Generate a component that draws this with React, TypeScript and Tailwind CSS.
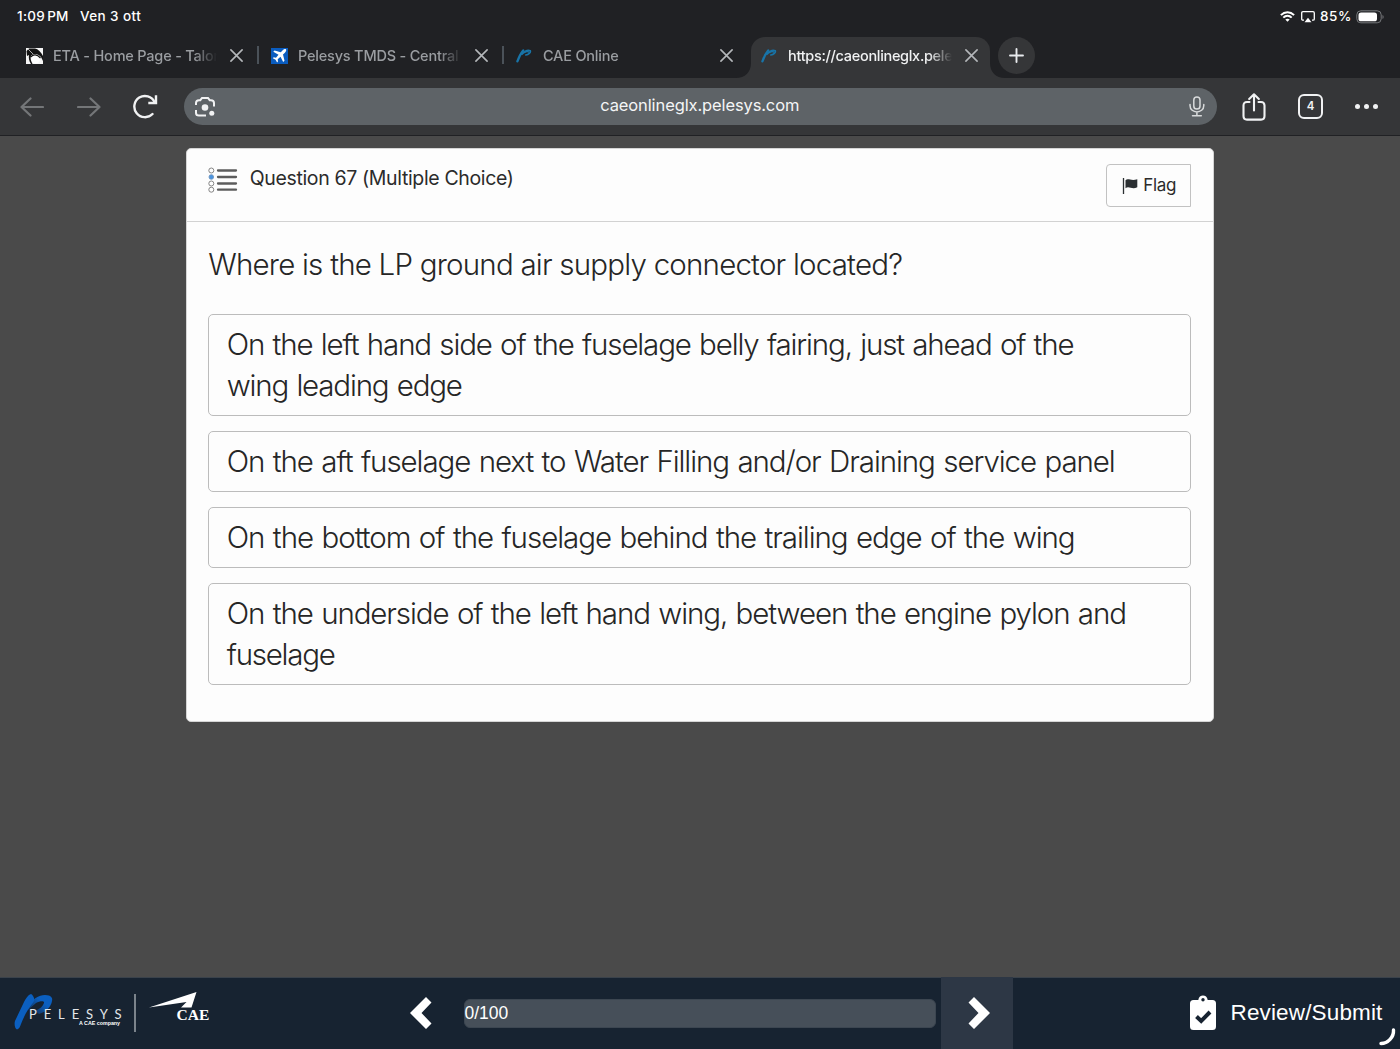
import type { ReactNode } from 'react';

const PelesysLogo = ({ className }: { className: string }) => (
  <svg className={className} viewBox="0 0 39 36" fill="none">
    <defs>
      <linearGradient id="loop" x1="36" y1="3" x2="22" y2="19" gradientUnits="userSpaceOnUse">
        <stop offset="0.4" stopColor="#0b5fc0" />
        <stop offset="1" stopColor="#123a6b" />
      </linearGradient>
    </defs>
    <path d="M13 13 C18 5 25 1 31 1 C37 1 39 4 38 7 C37 13 32 18 25 20 L21 17 C26 15 29 12 30 9 C31 6.500 26 6.500 22 9 L14 16 Z" fill="url(#loop)" />
    <path d="M17 0 C14 1 12 4 10 8 L1 27 C0 30 1 35 3 35.500 C5 35 6 33 7 30 C10 22 14 15 19.500 8 C21.500 5 19 1 17 0 Z" fill="#0b5fc0" />
  </svg>
);

const PelesysFavicon = () => (
  <svg className="ml-[1px] h-[14px] w-[16px]" viewBox="0 0 16 14" fill="none" stroke="#1874a8" strokeLinecap="round">
    <path d="M7.200 1.400 C5 4 2.800 8.500 1.400 12.400" strokeWidth="2.300" />
    <path d="M6 5.200 C9 1.800 12.500 0.900 14.200 1.700 C15 3.500 12.500 5.600 9.800 6" strokeWidth="1.700" />
    <path d="M8 3.800 C10 2.500 12 2.500 12.500 3" strokeWidth="1.300" />
  </svg>
);

const TalonIcon = () => (
  <svg className="ml-[1px] h-4 w-[17px]" viewBox="0 0 17 16">
    <rect width="17" height="16" fill="#f5f5f5" />
    <path d="M0.500 3 L3 0.500 H9 C12 1 15 4 17 8 V13 L15 9 C12 5.500 7 5 5 8 C4 10.500 5 13 6.500 16 H5 C3 13 2.500 10 3 7 L1 8 Z" fill="#131313" />
    <path d="M2 1 L7 6" stroke="#e8e8e8" strokeWidth="0.700" />
    <circle cx="9.800" cy="11.200" r="4.300" fill="#fff" />
    <path d="M5 9 C7 6 11 6 14.500 10" stroke="#131313" strokeWidth="1.200" fill="none" />
  </svg>
);

const PlaneIcon = () => (
  <svg className="ml-[1px] h-4 w-[17px]" viewBox="0 0 17 16">
    <rect width="17" height="16" fill="#0a5cbf" />
    <path
      d="M15 1.200 C14 0.600 12.600 1.200 11.500 2.400 L9.800 4.200 L3.500 2.600 L2.300 3.800 L7.500 6.800 L5 9.700 L2.700 9.300 L1.800 10.200 L4.600 11.700 L6.100 14.400 L7 13.600 L6.700 11.300 L9.500 8.700 L12.200 13.900 L13.500 12.700 L12 6.500 L13.900 4.700 C15.100 3.500 15.600 2 15 1.200 Z"
      fill="#fff"
    />
  </svg>
);

const Cross = () => (
  <svg className="h-[13px] w-[13px] shrink-0" viewBox="0 0 13 13" stroke="#b4b7ba" strokeWidth="1.6" strokeLinecap="round">
    <path d="M0.900 0.900 L12.100 12.100 M12.100 0.900 L0.900 12.100" />
  </svg>
);

function Tab({ icon, title, active, divider }: { icon: ReactNode; title: ReactNode; active?: boolean; divider?: boolean }) {
  return (
    <div className="flex h-[41px] w-[245px] shrink-0">
      <div className={active ? 'relative flex w-[239px] items-center rounded-t-[14px] bg-[#353638] pb-1 pl-[9px]' : 'flex w-[239px] items-center pb-1 pl-[9px]'}>
        <div className="flex w-[28px] shrink-0 items-center">{icon}</div>
        <div
          className={
            active
              ? 'w-[164px] overflow-hidden whitespace-nowrap text-[14.5px] font-medium tracking-[-0.31px] text-[#f1f2f3] [mask-image:linear-gradient(to_right,black_86%,transparent)]'
              : 'w-[164px] overflow-hidden whitespace-nowrap text-[14.5px] font-medium tracking-[-0.2px] text-[#9a9da1] [mask-image:linear-gradient(to_right,black_86%,transparent)]'
          }
        >
          {title}
        </div>
        <div className="ml-[13px] flex">
          <Cross />
        </div>
        {active && (
          <>
            <svg className="absolute -left-[15px] bottom-0 h-[15px] w-[15px]" viewBox="0 0 15 15">
              <path d="M15 0 V15 H0 C9 15 15 9 15 0 Z" fill="#353638" />
            </svg>
            <svg className="absolute -right-[15px] bottom-0 h-[15px] w-[15px]" viewBox="0 0 15 15">
              <path d="M0 0 V15 H15 C6 15 0 9 0 0 Z" fill="#353638" />
            </svg>
          </>
        )}
      </div>
      {divider && <div className="ml-[2px] mt-[9px] h-[18px] w-[1.5px] bg-[#4b5259]" />}
    </div>
  );
}

function StatusBar() {
  return (
    <div className="flex h-[37px] items-start justify-between pl-[17px] pr-[16px] pt-[7px] text-[13.5px] font-medium leading-[19px] text-white">
      <div className="flex">
        <span className="w-[63px] whitespace-nowrap tracking-[0.3px]">1:09<span className="ml-[2px]">PM</span></span>
        <span className="whitespace-nowrap tracking-[0.4px]">Ven 3 ott</span>
      </div>
      <div className="flex h-[19px] items-center">
        <svg className="h-[11px] w-[15px]" viewBox="0 0 15 11" fill="none" stroke="#fff" strokeWidth="2">
          <path d="M0.900 4.100 C4.700 0.300 10.300 0.300 14.100 4.100" />
          <path d="M3.300 6.600 C5.800 4.200 9.200 4.200 11.700 6.600" />
          <path d="M7.500 10.800 L5.300 8.600 C6.600 7.500 8.400 7.500 9.700 8.600 Z" fill="#fff" stroke="none" />
        </svg>
        <svg className="ml-[6px] h-[12px] w-[14px]" viewBox="0 0 14 12" fill="none">
          <path d="M3 9.200 H2 Q0.700 9.200 0.700 7.900 V2 Q0.700 0.700 2 0.700 H12 Q13.300 0.700 13.300 2 V7.900 Q13.300 9.200 12 9.200 H11" stroke="#fff" strokeWidth="1.3" />
          <path d="M7 6.800 L10.500 11.300 H3.500 Z" fill="#fff" />
        </svg>
        <span className="ml-[5px] w-[32px] tracking-[0.6px]">85%</span>
        <svg className="ml-[4px] h-[14px] w-[28px]" viewBox="0 0 28 14">
          <rect x="0.800" y="0.800" width="24.400" height="12" rx="4" fill="none" stroke="#77797c" />
          <rect x="2.500" y="2.500" width="18.500" height="8.800" rx="2.600" fill="#fff" />
          <path d="M26.500 5 C28 5.500 28 8.500 26.500 9 Z" fill="#77797c" />
        </svg>
      </div>
    </div>
  );
}

function Toolbar() {
  return (
    <div className="flex h-[58px] items-center border-b-[1.5px] border-[#202124] bg-[#353638]">
      <svg className="ml-[20px] h-[20px] w-[24px]" viewBox="0 0 24 20" fill="none" stroke="#747678" strokeWidth="2.2" strokeLinecap="round" strokeLinejoin="round">
        <path d="M23 10 H1.500 M10.500 1.500 L1.500 10 L10.500 18.500" />
      </svg>
      <svg className="ml-[33px] h-[20px] w-[24px]" viewBox="0 0 24 20" fill="none" stroke="#747678" strokeWidth="2.200" strokeLinecap="round" strokeLinejoin="round">
        <path d="M1 10 H22.500 M13.500 1.500 L22.500 10 L13.500 18.500" />
      </svg>
      <svg className="ml-[32px] h-[25px] w-[26px]" viewBox="0 0 26 25" fill="none" stroke="#f1f2f3" strokeWidth="2.400">
        <path d="M19.500 20 A10.600 10.600 0 1 1 21.500 8" strokeLinecap="round" />
        <path d="M16.500 9 H23 V2.500" strokeLinecap="square" />
      </svg>
      <div className="ml-[24.5px] flex h-[37px] w-[1033px] items-center rounded-full bg-[#5e6367]">
        <svg className="ml-[11.500px] h-[20px] w-[20px]" viewBox="0 0 20 20" fill="none" stroke="#f1f2f3" strokeWidth="2">
          <path d="M1 8 V6 Q1 3.200 4 3.200 H5.300 L7 1 H13 L14.700 3.200 H16 Q19 3.200 19 6 V9.500 M1 13 V16 Q1 18.500 4 18.500 H11" />
          <circle cx="10" cy="10.500" r="3.300" fill="#f1f2f3" stroke="none" />
          <circle cx="16.800" cy="16.200" r="2.500" fill="#f1f2f3" stroke="none" />
        </svg>
        <div className="flex-1 pb-[3px] pr-[4px] text-center text-[16.500px] leading-[24px] text-[#f4f5f6]"><span className="tracking-[-0.12px]">caeonlineglx.pelesys.com</span></div>
        <svg className="mr-[12px] h-[21px] w-[16px]" viewBox="0 0 16 21" fill="none" stroke="#d8dadb" strokeWidth="1.500" strokeLinecap="round">
          <rect x="4.800" y="0.900" width="6.200" height="12.200" rx="3.100" />
          <path d="M1 8.500 V9.500 C1 18 14.800 18 14.800 9.500 V8.500 M7.900 16 V19.500 M3.500 19.800 H12.300" />
        </svg>
      </div>
      <svg className="ml-[25.500px] h-[28px] w-[24px]" viewBox="0 0 24 28" fill="none" stroke="#f1f2f3" strokeWidth="2.100" strokeLinecap="round" strokeLinejoin="round">
        <path d="M7.500 9 H5 Q1.500 9 1.500 12.500 V23 Q1.500 26.600 5 26.600 H19 Q22.500 26.600 22.500 23 V12.500 Q22.500 9 19 9 H16.500 M12 17.500 V1.500 M7.200 6 L12 1.300 L16.800 6" />
      </svg>
      <div className="ml-[32px] flex h-[25px] w-[25px] items-center justify-center rounded-[6px] border-2 border-[#f1f2f3] pt-px text-[11.500px] font-semibold text-[#f1f2f3]">4</div>
      <div className="ml-[32px] flex gap-[4px]">
        <div className="h-[5px] w-[5px] rounded-full bg-[#f1f2f3]" />
        <div className="h-[5px] w-[5px] rounded-full bg-[#f1f2f3]" />
        <div className="h-[5px] w-[5px] rounded-full bg-[#f1f2f3]" />
      </div>
    </div>
  );
}

const Choice = ({ children }: { children: ReactNode }) => (
  <div className="rounded-[5px] border border-[#bcbcbc] bg-[#fdfdfd] pb-[8.300px] pl-[17.500px] pt-[8.900px] text-[29.500px] leading-[41.400px] text-[#262626] [word-spacing:1.200px]">{children}</div>
);

function QuestionCard() {
  return (
    <div className="h-[574px] w-[1028.500px] rounded-[5px] border border-[#d5d5d5] bg-[#fdfdfd] font-[Inter,sans-serif] font-light">
      <div className="flex h-[73px] items-start border-b border-[#d2d2d2] pl-[21px] pr-[22px]">
        <svg className="mt-[18px] h-[26px] w-[30px]" viewBox="0 0 30 26" fill="none">
          <g stroke="#777" strokeWidth="0.900">
            <circle cx="3.300" cy="3.500" r="2.500" />
            <circle cx="3.300" cy="10" r="2.300" fill="#4a94e0" stroke="#6e95c0" />
            <circle cx="3.300" cy="16.500" r="2.500" />
            <circle cx="3.300" cy="22.700" r="2.500" />
          </g>
          <path d="M10 3.500 H28 M10 10 H28 M10 16.500 H28 M10 22.700 H28" stroke="#5c5c5c" strokeWidth="2.300" strokeLinecap="round" />
        </svg>
        <h1 className="ml-[12px] mt-[15px] flex-1 whitespace-nowrap text-[19.500px] font-normal leading-[28px] text-[#2b2b2b]"><span className="tracking-[-0.35px]">Question 67 (Multiple Choice)</span></h1>
        <button className="mt-[15px] flex h-[43px] w-[85.500px] items-center rounded-l-[4px] border border-[#c2c2c2] pl-[15px] text-[17px] font-normal text-[#2b2b2b]">
          <svg className="h-[16px] w-[16px]" viewBox="0 0 16 16">
            <path d="M1.500 0 V16" stroke="#2b2f32" strokeWidth="1.300" />
            <path d="M3.500 2.200 C6 -0.500 9 3.500 15.300 1.200 V9.200 C10 12 7 7.500 3.500 10.200 Z" fill="#2b2f32" />
          </svg>
          <span className="ml-[5.500px] tracking-[-0.35px]">Flag</span>
        </button>
      </div>
      <div className="pl-[21.500px] pr-[22px] pt-[21px]">
        <h2 className="whitespace-nowrap text-[29.500px] leading-[42px] text-[#262626]"><span className="tracking-[-0.800px] [word-spacing:0.100px]">Where is the LP ground air supply connector located?</span></h2>
        <div className="mt-[29px] flex flex-col gap-[15.200px]">
          <Choice>
            <span className="whitespace-nowrap tracking-[-1.140px]">On the left hand side of the fuselage belly fairing, just ahead of the</span><br />
            <span className="whitespace-nowrap tracking-[-1.180px]">wing leading edge</span>
          </Choice>
          <Choice><span className="whitespace-nowrap tracking-[-1.070px]">On the aft fuselage next to Water Filling and/or Draining service panel</span></Choice>
          <Choice><span className="whitespace-nowrap tracking-[-1.040px]">On the bottom of the fuselage behind the trailing edge of the wing</span></Choice>
          <Choice>
            <span className="whitespace-nowrap tracking-[-1.090px]">On the underside of the left hand wing, between the engine pylon and</span><br />
            <span className="whitespace-nowrap tracking-[-1.250px]">fuselage</span>
          </Choice>
        </div>
      </div>
    </div>
  );
}

function Footer() {
  return (
    <footer className="relative flex h-[72px] items-center bg-[#172331] text-white shadow-[inset_0_1px_0_#3a424b]">
      <div className="relative ml-[14px] h-[40px] w-[120px]">
        <PelesysLogo className="absolute left-0 top-[1px] h-[36px] w-[39px]" />
        <div className="absolute left-[15px] top-[12px] whitespace-nowrap font-[Lato,sans-serif] text-[13px] leading-[19px] tracking-[6.900px] text-[#e4e7ea]">PELESYS</div>
        <div className="absolute left-[65px] top-[27px] whitespace-nowrap font-['Liberation_Sans',sans-serif] text-[5.300px] font-bold leading-[7px]">A CAE company</div>
      </div>
      <div className="h-[38px] w-[1.500px] bg-[#7b838b]" />
      <div className="relative ml-[13px] h-[38px] w-[62px]">
        <svg className="absolute -top-[2px] left-0 h-[16px] w-[48px]" viewBox="0 0 48 16">
          <path d="M0 15.500 L47.500 0 L42.500 15.500 H32 L37.500 10 Z" fill="#fff" />
        </svg>
        <div className="absolute left-[28px] top-[11px] font-['Liberation_Serif',serif] text-[15.500px] font-bold leading-[20px]">CAE</div>
      </div>
      <svg className="ml-[199px] h-[32px] w-[22px]" viewBox="0 0 22 32" fill="none">
        <path d="M16 0 L21.500 5.500 L11.500 16 L21.500 26.500 L16 32 L0 16 Z" fill="#fff" />
      </svg>
      <div className="ml-[32px] flex h-[29px] w-[472px] items-center rounded-[6px] border border-[#3c4651] bg-[#464f59] font-['Liberation_Sans',sans-serif] text-[17.500px]">0/100</div>
      <div className="ml-[5px] flex h-full w-[72px] items-center justify-center bg-[#2d3745]">
        <svg className="ml-[4px] h-[32px] w-[22px]" viewBox="0 0 22 32">
          <path d="M6 0 L0.500 5.500 L10.500 16 L0.500 26.500 L6 32 L22 16 Z" fill="#fff" />
        </svg>
      </div>
      <svg className="ml-[177px] h-[36px] w-[26px]" viewBox="0 0 26 36">
        <path d="M3.500 5 H8.300 C9 -0.900 17 -0.900 17.700 5 H22.500 Q26 5 26 8.500 V31.500 Q26 35 22.500 35 H3.500 Q0 35 0 31.500 V8.500 Q0 5 3.500 5 Z" fill="#fff" />
        <circle cx="13" cy="4.700" r="1.700" fill="#172331" />
        <path d="M6.500 21.500 L11.200 26 L20 17" stroke="#172331" strokeWidth="4" fill="none" />
      </svg>
      <span className="ml-[15px] whitespace-nowrap font-['Liberation_Sans',sans-serif] text-[22.500px] leading-[30px] tracking-[0.150px]">Review/Submit</span>
      <svg className="absolute bottom-[3px] right-[4px] h-[18px] w-[18px]" viewBox="0 0 18 18">
        <path d="M15.500 2 C16 9 10 15.500 3 15.500" stroke="#fff" strokeWidth="3.400" strokeLinecap="round" fill="none" />
      </svg>
    </footer>
  );
}

export default function App() {
  return (
    <div className="flex h-[1049px] w-[1400px] flex-col overflow-hidden bg-[#4a4a4a] font-[Inter,sans-serif]">
      <header className="bg-[#202124]">
        <StatusBar />
        <div className="flex h-[41px] pl-4">
          <Tab icon={<TalonIcon />} title={<span>ETA - Home Page - Talon</span>} divider />
          <Tab icon={<PlaneIcon />} title={<span>Pelesys TMDS - Central</span>} divider />
          <Tab icon={<PelesysFavicon />} title={<span>CAE Online</span>} />
          <Tab icon={<PelesysFavicon />} title={<span>https://caeonlineglx.pele</span>} active />
          <div className="ml-[2px] flex h-[37px] w-[37px] items-center justify-center rounded-full bg-[#353638]">
            <svg className="h-[15px] w-[15px]" viewBox="0 0 15 15" stroke="#e8eaed" strokeWidth="1.900" strokeLinecap="round">
              <path d="M7.500 1 V14 M1 7.500 H14" />
            </svg>
          </div>
        </div>
      </header>
      <Toolbar />
      <main className="flex flex-1 justify-center pt-[12px]">
        <QuestionCard />
      </main>
      <Footer />
    </div>
  );
}
